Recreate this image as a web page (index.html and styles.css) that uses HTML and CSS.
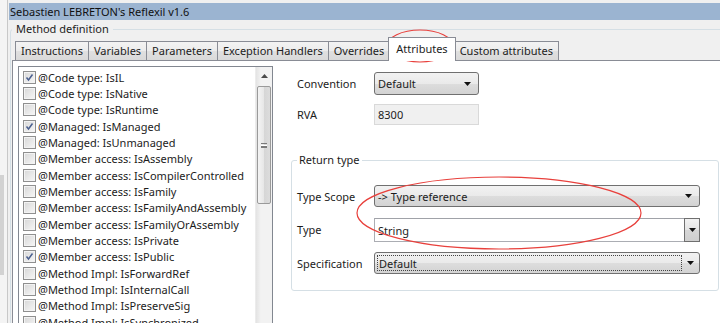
FILE: index.html
```html
<!DOCTYPE html>
<html>
<head>
<meta charset="utf-8">
<link rel="stylesheet" href="styles.css">
</head>
<body>
<div class="screen">
  <div class="side"><div class="side-bar"></div></div>
  <div class="window">
    <div class="titlebar">Sebastien LEBRETON's Reflexil v1.6</div>
    <fieldset class="group method">
      <legend>Method definition</legend>
      <div class="tabs">
        <div class="tab">Instructions</div>
        <div class="tab">Variables</div>
        <div class="tab">Parameters</div>
        <div class="tab">Exception Handlers</div>
        <div class="tab">Overrides</div>
        <div class="tab active">Attributes</div>
        <div class="tab">Custom attributes</div>
      </div>
      <div class="panel">
        <div class="checklist">
          <ul class="items">
            <li class="item"><span class="cb checked"><svg width="11" height="11" viewBox="0 0 11 11"><path d="M2.5 5.5 L4.5 8 L8.5 2.5" /></svg></span>@Code type: IsIL</li>
            <li class="item"><span class="cb"></span>@Code type: IsNative</li>
            <li class="item"><span class="cb"></span>@Code type: IsRuntime</li>
            <li class="item"><span class="cb checked"><svg width="11" height="11" viewBox="0 0 11 11"><path d="M2.5 5.5 L4.5 8 L8.5 2.5" /></svg></span>@Managed: IsManaged</li>
            <li class="item"><span class="cb"></span>@Managed: IsUnmanaged</li>
            <li class="item"><span class="cb"></span>@Member access: IsAssembly</li>
            <li class="item"><span class="cb"></span>@Member access: IsCompilerControlled</li>
            <li class="item"><span class="cb"></span>@Member access: IsFamily</li>
            <li class="item"><span class="cb"></span>@Member access: IsFamilyAndAssembly</li>
            <li class="item"><span class="cb"></span>@Member access: IsFamilyOrAssembly</li>
            <li class="item"><span class="cb"></span>@Member access: IsPrivate</li>
            <li class="item"><span class="cb checked"><svg width="11" height="11" viewBox="0 0 11 11"><path d="M2.5 5.5 L4.5 8 L8.5 2.5" /></svg></span>@Member access: IsPublic</li>
            <li class="item"><span class="cb"></span>@Method Impl: IsForwardRef</li>
            <li class="item"><span class="cb"></span>@Method Impl: IsInternalCall</li>
            <li class="item"><span class="cb"></span>@Method Impl: IsPreserveSig</li>
            <li class="item"><span class="cb"></span>@Method Impl: IsSynchronized</li>
          </ul>
          <div class="scrollbar">
            <div class="sb-up"><svg width="7" height="4" viewBox="0 0 7 4"><path d="M0 4 L3.5 0 L7 4 Z" /></svg></div>
            <div class="sb-thumb"><span class="grip"></span></div>
          </div>
        </div>
        <div class="props">
          <div class="row">
            <span class="label">Convention</span>
            <div class="combo conv"><span class="val">Default</span><svg class="arrow" width="7" height="4" viewBox="0 0 7 4"><path d="M0 0 L7 0 L3.5 4 Z" /></svg></div>
          </div>
          <div class="row rva">
            <span class="label">RVA</span>
            <div class="textbox readonly">8300</div>
          </div>
          <fieldset class="group ret">
            <legend>Return type</legend>
            <div class="form">
              <span class="label">Type Scope</span>
              <div class="combo"><span class="val">-&gt; Type reference</span><svg class="arrow" width="7" height="4" viewBox="0 0 7 4"><path d="M0 0 L7 0 L3.5 4 Z" /></svg></div>
              <span class="label">Type</span>
              <div class="textbox typebox"><span class="val">String</span><span class="dropbtn"><svg width="7" height="4" viewBox="0 0 7 4"><path d="M0 0 L7 0 L3.5 4 Z" /></svg></span></div>
              <span class="label">Specification</span>
              <div class="combo spec"><span class="focus">Default</span><svg class="arrow" width="7" height="4" viewBox="0 0 7 4"><path d="M0 0 L7 0 L3.5 4 Z" /></svg></div>
            </div>
          </fieldset>
        </div>
      </div>
    </fieldset>
  </div>
  <svg class="annot" width="720" height="323" viewBox="0 0 720 323">
    <ellipse cx="420" cy="46" rx="33" ry="16" />
    <ellipse cx="499" cy="213" rx="142" ry="36" />
  </svg>
</div>
</body>
</html>
```
FILE: styles.css
```css
* { box-sizing: border-box; }
body {
  margin: 0;
  background: #f0f0f0;
  font: 11px "Noto Sans", "Open Sans", sans-serif;
  color: #1c1c1c;
  overflow: hidden;
}
.screen {
  position: relative;
  width: 720px;
  height: 323px;
  overflow: hidden;
  display: flex;
  background: #f0f0f0;
}
.side {
  width: 8px;
  flex: none;
  background: #f4f4f4;
  border-right: 1px solid #c8c8c8;
  display: flex;
  flex-direction: column;
}
.side-bar {
  margin-top: 175px;
  width: 4px;
  height: 100px;
  background: #d2d2d2;
}
.window {
  width: 790px;
  flex: none;
  padding-top: 3px;
  border-top: 0;
}
.titlebar {
  height: 17px;
  line-height: 17px;
  margin-left: 1px;
  padding-left: 1px;
  background: #9bb4d1;
  color: #111;
  white-space: nowrap;
}
.group {
  border: 1px solid #d5dfe5;
  border-radius: 3px;
  min-width: 0;
}
.group > legend {
  padding: 0 4px;
  line-height: 16px;
  white-space: nowrap;
}
.method {
  margin: 1px 0 0 2px;
  padding: 0 0 0 1px;
  height: 340px;
}
.tabs {
  display: flex;
  align-items: flex-end;
  height: 23px;
  padding-left: 3px;
  position: relative;
  z-index: 1;
}
.tab {
  height: 19px;
  line-height: 17px;
  padding: 0 5px 0 5px;
  border: 1px solid #898c95;
  border-bottom: none;
  margin-right: -1px;
  background: linear-gradient(#f3f3f3, #ececec 50%, #e0e0e0 51%, #d9d9d9);
  white-space: nowrap;
}
.tab.active {
  height: 24px;
  margin: 0 -2px -1px -1px;
  padding: 2px 7px 0 7px;
  background: #fff;
  position: relative;
  z-index: 2;
}
.panel {
  border: 1px solid #898c95;
  background: #fff;
  display: flex;
  align-items: flex-start;
  padding: 5px 0 0 5px;
  height: 300px;
}
.checklist {
  width: 255px;
  height: 300px;
  border: 1px solid #828790;
  display: flex;
  flex: none;
}
.items {
  flex: 1;
  list-style: none;
  margin: 0;
  padding: 2px 0 0 4px;
}
.item {
  height: 16.33px;
  display: flex;
  align-items: center;
  white-space: nowrap;
}
.cb {
  width: 13px;
  height: 13px;
  flex: none;
  margin-right: 2px;
  border: 1px solid #8f8f8f;
  background: linear-gradient(135deg, #d7d7d7, #f7f7f7);
  box-shadow: inset 0 0 0 1px #f3f3f3;
  display: flex;
  align-items: center;
  justify-content: center;
}
.cb svg path {
  fill: none;
  stroke: #4a5f8f;
  stroke-width: 1.5;
}
.scrollbar {
  width: 17px;
  flex: none;
  background: linear-gradient(90deg, #e3e3e3, #f2f2f2 30%, #f2f2f2);
  border-left: 1px solid #ececec;
  display: flex;
  flex-direction: column;
  align-items: center;
}
.sb-up {
  height: 18px;
  width: 100%;
  display: flex;
  align-items: center;
  justify-content: center;
}
.sb-up svg path { fill: #4a4a4a; }
.sb-thumb {
  margin-top: 1px;
  width: 14px;
  height: 118px;
  border: 1px solid #9a9a9a;
  border-radius: 2px;
  background: linear-gradient(90deg, #f4f4f4, #e6e6e6 50%, #d6d6d6 51%, #dcdcdc);
  display: flex;
  align-items: center;
  justify-content: center;
}
.grip {
  width: 6px;
  height: 5px;
  border-top: 1px solid #7a7a7a;
  border-bottom: 1px solid #7a7a7a;
  background: linear-gradient(#fff 0 1px, #7a7a7a 1px 2px, transparent 2px);
  background-size: 100% 100%;
  background-position: 0 1px;
  background-repeat: no-repeat;
}
.props {
  margin-left: 18px;
  padding-top: 6px;
  display: flex;
  flex-direction: column;
}
.row {
  display: flex;
  align-items: center;
  padding-left: 6px;
}
.label {
  width: 77px;
  flex: none;
  white-space: nowrap;
}
.row .label { padding-top: 0; }
.combo {
  height: 22px;
  border: 1px solid #707070;
  border-radius: 3px;
  background: linear-gradient(#f2f2f2, #eaeaea 50%, #dddddd 51%, #d3d3d3);
  display: flex;
  align-items: center;
  justify-content: space-between;
  padding-left: 3px;
  white-space: nowrap;
}
.combo .arrow { margin-right: 7px; flex: none; }
.combo .arrow path, .dropbtn path { fill: #111; }
.conv {
  width: 105px;
  height: 23px;
}
.rva { margin-top: 9px; }
.textbox {
  height: 21px;
  border: 1px solid #abadb3;
  border-top-color: #a0a2a8;
  background: #fff;
  padding-left: 3px;
  display: flex;
  align-items: center;
}
.readonly {
  width: 105px;
  background: #f0f0f0;
  border-color: #d9d9d9;
}
.ret {
  margin: 27px 0 0 0;
  width: 428px;
  padding: 0 17px 16px 5px;
}
.ret > legend { padding: 0 2px; }
.form {
  display: grid;
  grid-template-columns: 77px 326px;
  align-items: center;
  padding-top: 17px;
  row-gap: 11px;
}
.typebox {
  height: 24px;
  justify-content: space-between;
  margin-bottom: -1px;
}
.dropbtn {
  width: 16px;
  height: 24px;
  margin: -1px -1px -1px 0;
  border: 1px solid #6f6f6f;
  background: linear-gradient(#f2f2f2, #e4e4e4 50%, #d6d6d6 51%, #cfcfcf);
  display: flex;
  align-items: center;
  justify-content: center;
}
.spec {
  padding: 2px 0 2px 2px;
}
.spec .focus {
  flex: 1;
  height: 100%;
  border: 1px dotted #444;
  display: flex;
  align-items: center;
  padding-left: 1px;
  margin-right: 0;
}
.spec .arrow { margin: 0 5px 0 5px; }
.annot {
  position: absolute;
  left: 0;
  top: 0;
  pointer-events: none;
}
.annot ellipse {
  fill: none;
  stroke: #e8403c;
  stroke-width: 1.2;
}
```
